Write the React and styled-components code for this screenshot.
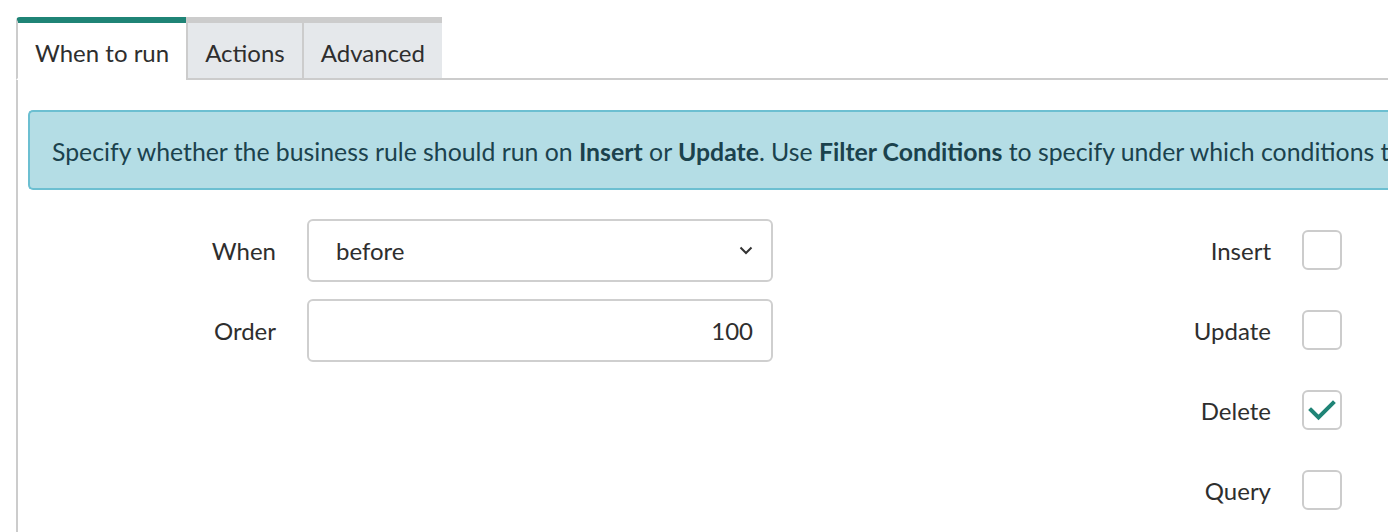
import styled, { createGlobalStyle } from "styled-components";
import { useState } from "react";

const GlobalStyle = createGlobalStyle`
  body {
    margin: 0;
    background: #fff;
    font-family: "Lato", "Noto Sans", sans-serif;
    color: #2e2e2e;
    overflow: hidden;
  }
`;

const Page = styled.div`
  padding: 17px 0 0 16px;
  width: 1600px;
`;

const TabBar = styled.div`
  display: flex;
  height: 63px;
`;

const Tab = styled.button`
  font: inherit;
  font-size: 24px;
  color: #2e2e2e;
  padding: 3px 17px 0 17px;
  border: none;
  border-left: 2px solid #cccccc;
  border-top: 6px solid ${(p) => (p.$active ? "#1f8476" : "#cccccc")};
  border-bottom: 2px solid ${(p) => (p.$active ? "transparent" : "#cccccc")};
  border-top-left-radius: ${(p) => (p.$active ? "4px" : "0")};
  background: ${(p) => (p.$active ? "#fff" : "#e5e8eb")};
  cursor: pointer;
  display: flex;
  align-items: center;
`;

const TabFiller = styled.div`
  flex: 1;
  border-bottom: 2px solid #cccccc;
`;

const Panel = styled.div`
  border-left: 2px solid #cccccc;
  padding: 30px 0 0 10px;
  min-height: 460px;
`;

const Info = styled.div`
  box-sizing: border-box;
  width: 1360px;
  height: 80px;
  background: #b4dde5;
  border: 2px solid #6cbfd1;
  border-right: none;
  border-radius: 5px 0 0 5px;
  display: flex;
  align-items: center;
  padding: 2px 0 0 22px;
  font-size: 24.8px;
  color: #1b424d;
  white-space: nowrap;
  overflow: hidden;
  b {
    font-weight: 700;
  }
`;

const Form = styled.div`
  display: flex;
  padding-top: 20px;
`;

const Column = styled.div`
  display: flex;
  flex-direction: column;
  width: ${(p) => p.$width}px;
`;

const Row = styled.div`
  display: grid;
  grid-template-columns: ${(p) => p.$labelWidth}px ${(p) => p.$fieldWidth}px;
  column-gap: 31px;
  align-items: center;
  height: 80px;
`;

const Label = styled.label`
  font-size: 24px;
  color: #2e2e2e;
  text-align: right;
`;

const Field = styled.div`
  box-sizing: border-box;
  height: 63px;
  border: 2px solid #cfcfcf;
  border-radius: 6px;
  display: flex;
  align-items: center;
  justify-content: ${(p) => (p.$right ? "flex-end" : "space-between")};
  padding: 0 18px 0 27px;
  font-size: 24px;
  color: #2e2e2e;
`;

const Check = styled.div`
  box-sizing: border-box;
  width: 40px;
  height: 40px;
  border: 2px solid #cccccc;
  border-radius: 6px;
  display: flex;
  align-items: center;
  justify-content: center;
  cursor: pointer;
`;

const Chevron = () => (
  <svg width="14" height="9" viewBox="0 0 14 9">
    <path d="M1.5 1.5 L7 7 L12.5 1.5" fill="none" stroke="#333" strokeWidth="2" />
  </svg>
);

const Tick = () => (
  <svg width="28" height="22" viewBox="0 0 28 22">
    <path
      d="M3 11 L10.5 18.5 L25 4"
      fill="none"
      stroke="#1f8476"
      strokeWidth="4"
      strokeLinecap="square"
    />
  </svg>
);

const tabs = ["When to run", "Actions", "Advanced"];

export default function App() {
  const [active, setActive] = useState(0);
  const [checks, setChecks] = useState({
    Insert: false,
    Update: false,
    Delete: true,
    Query: false,
  });

  return (
    <Page>
      <GlobalStyle />
      <TabBar>
        {tabs.map((t, i) => (
          <Tab key={t} $active={i === active} onClick={() => setActive(i)}>
            {t}
          </Tab>
        ))}
        <TabFiller />
      </TabBar>
      <Panel>
        <Info>
          Specify whether the business rule should run on&nbsp;<b>Insert</b>&nbsp;or&nbsp;
          <b>Update</b>. Use&nbsp;<b>Filter Conditions</b>&nbsp;to specify under which
          conditions t
        </Info>
        <Form>
          <Column $width={1043}>
            <Row $labelWidth={248} $fieldWidth={466}>
              <Label>When</Label>
              <Field>
                before
                <Chevron />
              </Field>
            </Row>
            <Row $labelWidth={248} $fieldWidth={466}>
              <Label>Order</Label>
              <Field $right>100</Field>
            </Row>
          </Column>
          <Column $width={300}>
            {Object.keys(checks).map((k) => (
              <Row key={k} $labelWidth={200} $fieldWidth={40}>
                <Label>{k}</Label>
                <Check onClick={() => setChecks({ ...checks, [k]: !checks[k] })}>
                  {checks[k] && <Tick />}
                </Check>
              </Row>
            ))}
          </Column>
        </Form>
      </Panel>
    </Page>
  );
}
